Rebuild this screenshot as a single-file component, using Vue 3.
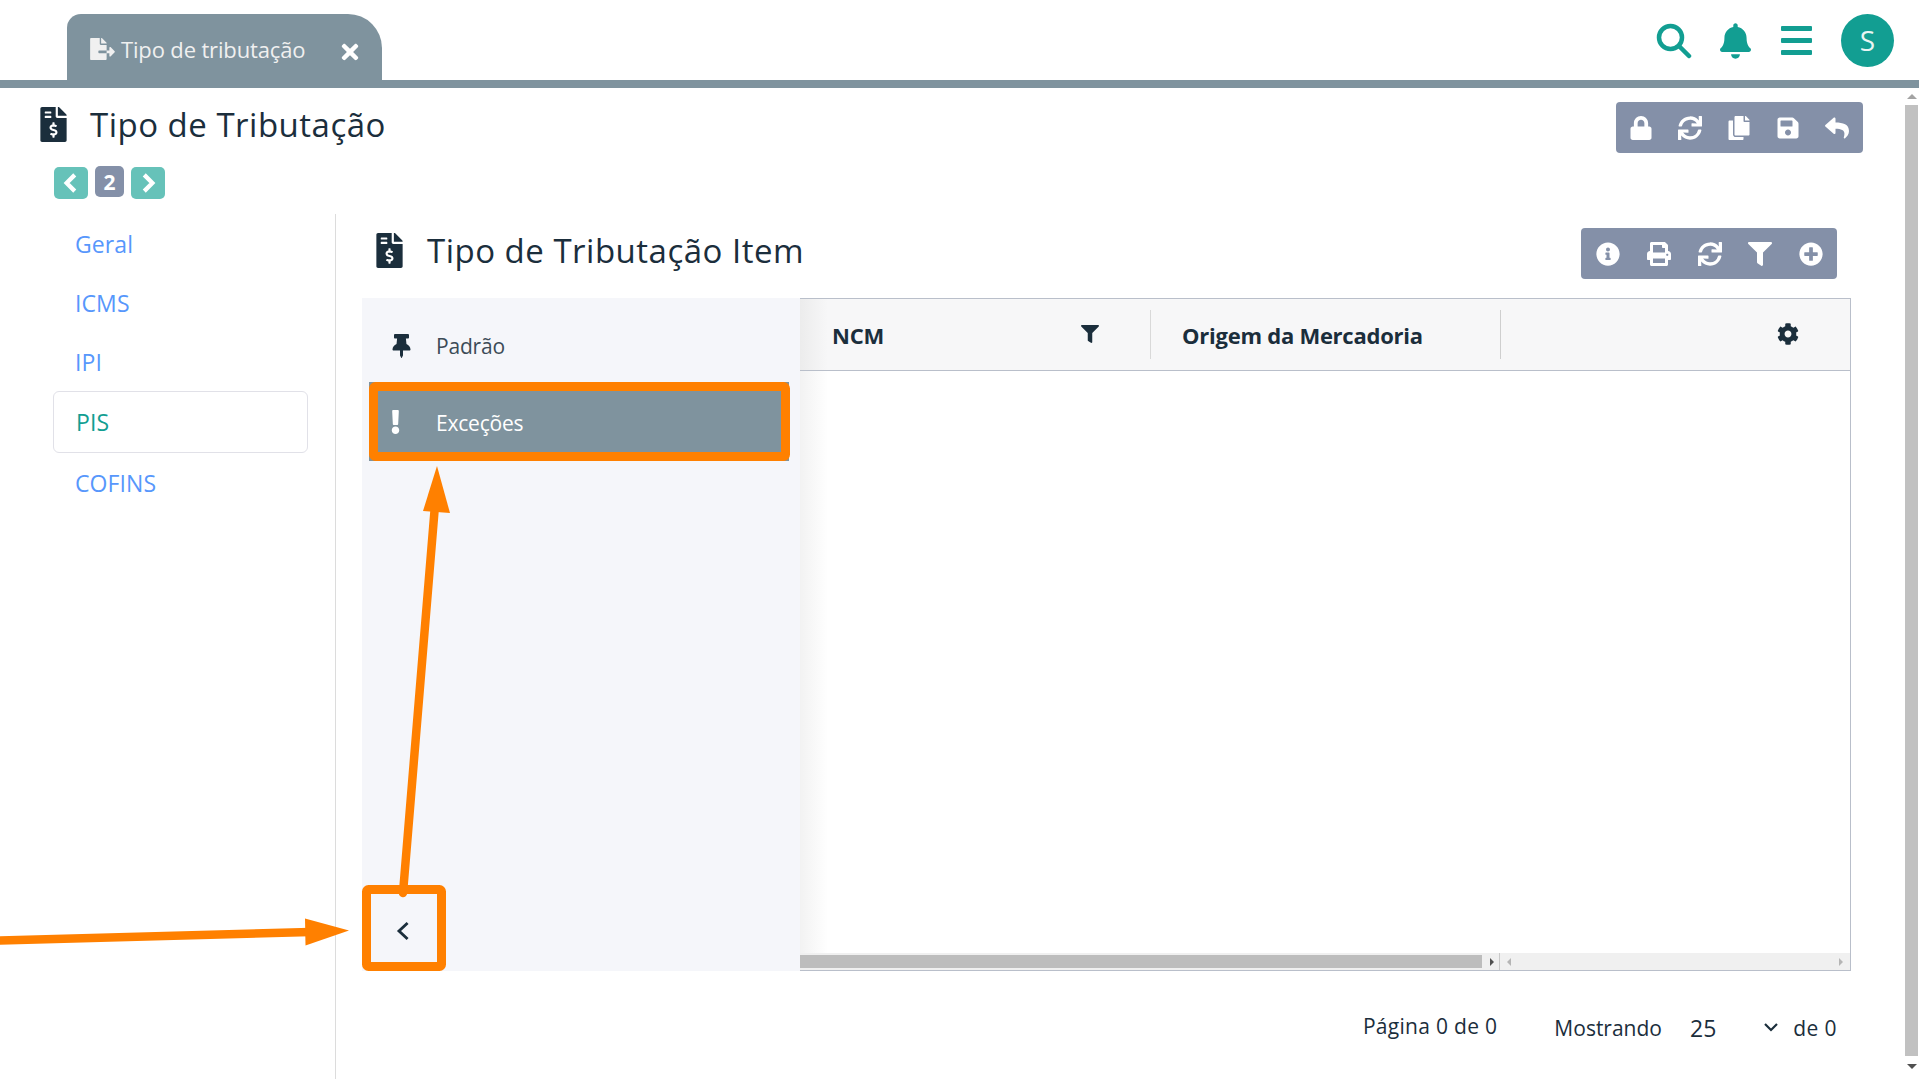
<script setup>
const P = {
  fileDollar: ['0 0 384 512', 'M377 105L279.1 7c-4.5-4.5-10.6-7-17-7H256v128h128v-6.1c0-6.3-2.5-12.4-7-16.9zm-153 31V0H24C10.7 0 0 10.7 0 24v464c0 13.3 10.7 24 24 24h336c13.3 0 24-10.7 24-24V160H248c-13.2 0-24-10.8-24-24zM64 72c0-4.42 3.58-8 8-8h80c4.42 0 8 3.58 8 8v16c0 4.42-3.58 8-8 8H72c-4.42 0-8-3.58-8-8V72zm0 80v-16c0-4.42 3.58-8 8-8h80c4.42 0 8 3.58 8 8v16c0 4.42-3.58 8-8 8H72c-4.42 0-8-3.58-8-8zm144 263.88V440c0 4.42-3.58 8-8 8h-16c-4.42 0-8-3.58-8-8v-24.29c-11.29-.58-22.27-4.52-31.37-11.35-3.9-2.93-4.1-8.77-.57-12.14l11.75-11.21c2.77-2.64 6.89-2.76 10.13-.73 3.87 2.42 8.26 3.72 12.82 3.72h28.11c6.5 0 11.8-5.92 11.8-13.19 0-5.95-3.61-11.19-8.77-12.73l-45-13.5c-18.59-5.58-31.58-23.42-31.58-43.39 0-24.52 19.05-44.44 42.67-45.07V232c0-4.42 3.58-8 8-8h16c4.42 0 8 3.58 8 8v24.29c11.29.58 22.27 4.51 31.37 11.35 3.9 2.93 4.1 8.77.57 12.14l-11.75 11.21c-2.77 2.64-6.89 2.76-10.13.73-3.87-2.43-8.26-3.72-12.82-3.72h-28.11c-6.5 0-11.8 5.92-11.8 13.19 0 5.95 3.61 11.19 8.77 12.73l45 13.5c18.59 5.58 31.58 23.42 31.58 43.39 0 24.53-19.05 44.44-42.67 45.07z'],
  fileExport: ['0 0 576 512', 'M384 121.9c0-6.3-2.5-12.4-7-16.9L279.1 7c-4.5-4.5-10.6-7-17-7H256v128h128zM571 308l-95.7-96.4c-10.1-10.1-27.4-3-27.4 11.3V288h-64v64h64v65.2c0 14.3 17.3 21.4 27.4 11.3L571 332c6.6-6.6 6.6-17.4 0-24zm-379 28v-32c0-8.8 7.2-16 16-16h176V160H248c-13.2 0-24-10.8-24-24V0H24C10.7 0 0 10.7 0 24v464c0 13.3 10.7 24 24 24h336c13.3 0 24-10.7 24-24V352H208c-8.8 0-16-7.2-16-16z'],
  times: ['0 0 352 512', 'M242.72 256l100.07-100.07c12.28-12.28 12.28-32.19 0-44.48l-22.24-22.24c-12.28-12.28-32.19-12.28-44.48 0L176 189.28 75.93 89.21c-12.28-12.28-32.19-12.28-44.48 0L9.21 111.45c-12.28 12.28-12.28 32.19 0 44.48L109.28 256 9.21 356.07c-12.28 12.28-12.28 32.19 0 44.48l22.24 22.24c12.28 12.28 32.2 12.28 44.48 0L176 322.72l100.07 100.07c12.28 12.28 32.2 12.28 44.48 0l22.24-22.24c12.28-12.28 12.28-32.19 0-44.48L242.72 256z'],
  bell: ['0 0 448 512', 'M224 512c35.32 0 63.97-28.65 63.97-64H160.03c0 35.35 28.65 64 63.97 64zm215.39-149.71c-19.32-20.76-55.47-51.99-55.47-154.29 0-77.7-54.48-139.9-127.94-155.16V32c0-17.67-14.32-32-31.98-32s-31.98 14.33-31.98 32v20.84C118.56 68.1 64.08 130.3 64.08 208c0 102.3-36.15 133.53-55.47 154.29-6 6.45-8.66 14.16-8.61 21.71.11 16.4 12.98 32 32.1 32h383.8c19.12 0 32-15.6 32.1-32 .05-7.55-2.61-15.27-8.61-21.71z'],
  lock: ['0 0 448 512', 'M400 224h-24v-72C376 68.2 307.8 0 224 0S72 68.2 72 152v72H48c-26.5 0-48 21.5-48 48v192c0 26.5 21.5 48 48 48h352c26.5 0 48-21.5 48-48V272c0-26.5-21.5-48-48-48zm-104 0H152v-72c0-39.7 32.3-72 72-72s72 32.3 72 72v72z'],
  sync: ['0 0 512 512', 'M440.65 12.57l4 82.77A247.16 247.16 0 0 0 255.83 8C134.73 8 33.91 94.92 12.29 209.82A12 12 0 0 0 24.09 224h49.05a12 12 0 0 0 11.67-9.26 175.91 175.91 0 0 1 317-56.94l-101.46-4.86a12 12 0 0 0-12.57 12v47.41a12 12 0 0 0 12 12H500a12 12 0 0 0 12-12V12a12 12 0 0 0-12-12h-47.37a12 12 0 0 0-11.98 12.57zM255.83 432a175.61 175.61 0 0 1-146-77.8l101.8 4.87a12 12 0 0 0 12.57-12v-47.4a12 12 0 0 0-12-12H12a12 12 0 0 0-12 12V500a12 12 0 0 0 12 12h47.35a12 12 0 0 0 12-12.6l-4.15-82.57A247.17 247.17 0 0 0 255.83 504c121.11 0 221.93-86.92 243.55-201.82a12 12 0 0 0-11.8-14.18h-49.05a12 12 0 0 0-11.67 9.26A175.86 175.86 0 0 1 255.83 432z'],
  copy: ['0 0 448 512', 'M320 448v40c0 13.255-10.745 24-24 24H24c-13.255 0-24-10.745-24-24V120c0-13.255 10.745-24 24-24h72v296c0 30.879 25.121 56 56 56h168zm0-344V0H152c-13.255 0-24 10.745-24 24v368c0 13.255 10.745 24 24 24h272c13.255 0 24-10.745 24-24V128H344c-13.2 0-24-10.8-24-24zm120.971-31.029L375.029 7.029A24 24 0 0 0 358.059 0H352v96h96v-6.059a24 24 0 0 0-7.029-16.97z'],
  save: ['0 0 448 512', 'M433.941 129.941l-83.882-83.882A48 48 0 0 0 316.118 32H48C21.49 32 0 53.49 0 80v352c0 26.51 21.49 48 48 48h352c26.51 0 48-21.49 48-48V163.882a48 48 0 0 0-14.059-33.941zM224 416c-35.346 0-64-28.654-64-64 0-35.346 28.654-64 64-64s64 28.654 64 64c0 35.346-28.654 64-64 64zm96-304.52V212c0 6.627-5.373 12-12 12H76c-6.627 0-12-5.373-12-12V108c0-6.627 5.373-12 12-12h228.52c3.183 0 6.235 1.264 8.485 3.515l3.48 3.48A11.996 11.996 0 0 1 320 111.48z'],
  reply: ['0 0 512 512', 'M8.309 189.836L184.313 37.851C199.719 24.546 224 35.347 224 56.015v80.053c160.629 1.839 288 34.032 288 186.258 0 61.441-39.581 122.309-83.333 154.132-13.653 9.931-33.111-2.533-28.077-18.631 45.344-145.012-21.507-183.51-176.59-185.742V360c0 20.7-24.3 31.453-39.687 18.164l-176.004-152c-11.071-9.562-11.086-26.753 0-36.328z'],
  info: ['0 0 512 512', 'M256 8C119.043 8 8 119.083 8 256c0 136.997 111.043 248 248 248s248-111.003 248-248C504 119.083 392.957 8 256 8zm0 110c23.196 0 42 18.804 42 42s-18.804 42-42 42-42-18.804-42-42 18.804-42 42-42zm56 254c0 6.627-5.373 12-12 12h-88c-6.627 0-12-5.373-12-12v-24c0-6.627 5.373-12 12-12h12v-64h-12c-6.627 0-12-5.373-12-12v-24c0-6.627 5.373-12 12-12h64c6.627 0 12 5.373 12 12v100h12c6.627 0 12 5.373 12 12v24z'],
  print: ['0 0 512 512', 'M448 192V77.25c0-8.49-3.37-16.62-9.37-22.63L393.37 9.37c-6-6-14.14-9.37-22.63-9.37H96C78.33 0 64 14.33 64 32v160c-35.35 0-64 28.65-64 64v112c0 8.84 7.16 16 16 16h48v96c0 17.67 14.33 32 32 32h320c17.67 0 32-14.33 32-32v-96h48c8.84 0 16-7.16 16-16V256c0-35.35-28.65-64-64-64zm-64 256H128v-96h256v96zm0-224H128V64h192v48c0 8.84 7.16 16 16 16h48v96zm48 72c-13.25 0-24-10.75-24-24 0-13.26 10.75-24 24-24s24 10.74 24 24c0 13.25-10.75 24-24 24z'],
  filter: ['0 0 512 512', 'M487.976 0H24.028C2.71 0-8.047 25.866 7.058 40.971L192 225.941V432c0 7.831 3.821 15.17 10.237 19.662l80 55.98C298.02 518.69 320 507.493 320 487.98V225.941l184.947-184.97C520.021 25.896 509.338 0 487.976 0z'],
  plus: ['0 0 512 512', 'M256 8C119 8 8 119 8 256s111 248 248 248 248-111 248-248S393 8 256 8zm144 276c0 6.6-5.4 12-12 12h-92v92c0 6.6-5.4 12-12 12h-56c-6.6 0-12-5.4-12-12v-92h-92c-6.6 0-12-5.4-12-12v-56c0-6.6 5.4-12 12-12h92v-92c0-6.6 5.4-12 12-12h56c6.6 0 12 5.4 12 12v92h92c6.6 0 12 5.4 12 12v56z'],
  cog: ['0 0 512 512', 'M487.4 315.7l-42.6-24.6c4.3-23.2 4.3-47 0-70.2l42.6-24.6c4.9-2.8 7.1-8.6 5.5-14-11.1-35.6-30-67.8-54.7-94.6-3.8-4.1-10-5.1-14.8-2.3L380.8 110c-17.9-15.4-38.5-27.3-60.8-35.1V25.8c0-5.6-3.9-10.5-9.4-11.7-36.7-8.2-74.3-7.8-109.2 0-5.5 1.2-9.4 6.1-9.4 11.7V75c-22.2 7.9-42.8 19.8-60.8 35.1L88.7 85.5c-4.9-2.8-11-1.9-14.8 2.3-24.7 26.7-43.6 58.9-54.7 94.6-1.7 5.4.6 11.2 5.5 14L67.3 221c-4.3 23.2-4.3 47 0 70.2l-42.6 24.6c-4.9 2.8-7.1 8.6-5.5 14 11.1 35.6 30 67.8 54.7 94.6 3.8 4.1 10 5.1 14.8 2.3l42.6-24.6c17.9 15.4 38.5 27.3 60.8 35.1v49.2c0 5.6 3.9 10.5 9.4 11.7 36.7 8.2 74.3 7.8 109.2 0 5.5-1.2 9.4-6.1 9.4-11.7v-49.2c22.2-7.9 42.8-19.8 60.8-35.1l42.6 24.6c4.9 2.8 11 1.9 14.8-2.3 24.7-26.7 43.6-58.9 54.7-94.6 1.5-5.5-.7-11.3-5.6-14.1zM256 336c-44.1 0-80-35.9-80-80s35.9-80 80-80 80 35.9 80 80-35.9 80-80 80z'],
  pin: ['0 0 384 512', 'M298.028 214.267L285.793 96H328c13.255 0 24-10.745 24-24V24c0-13.255-10.745-24-24-24H56C42.745 0 32 10.745 32 24v48c0 13.255 10.745 24 24 24h42.207L85.972 214.267C37.465 236.82 0 277.261 0 328c0 13.255 10.745 24 24 24h136v104.007c0 1.242.289 2.467.845 3.578l24 48c2.941 5.882 11.364 5.893 14.311 0l24-48a8.008 8.008 0 0 0 .845-3.578V352h136c13.255 0 24-10.745 24-24-.001-51.183-37.983-91.42-85.973-113.733z'],
  bang: ['0 0 192 512', 'M176 432c0 44.112-35.888 80-80 80s-80-35.888-80-80 35.888-80 80-80 80 35.888 80 80zM25.26 25.199l13.6 272C39.499 309.972 50.041 320 62.83 320h66.34c12.789 0 23.331-10.028 23.97-22.801l13.6-272C167.425 11.49 156.496 0 142.77 0H49.23C35.504 0 24.575 11.49 25.26 25.199z'],
}
const topTools = ['lock', 'sync', 'copy', 'save', 'reply']
const itemTools = ['info', 'print', 'sync', 'filter', 'plus']
const tabs = [
  { label: 'Geral' },
  { label: 'ICMS' },
  { label: 'IPI' },
  { label: 'PIS', active: true },
  { label: 'COFINS' },
]
</script>

<template>
  <div class="page">
    <header class="topbar">
      <div class="tab">
        <svg class="tab-icon" :viewBox="P.fileExport[0]"><path :d="P.fileExport[1]" /></svg>
        <span class="tab-label">Tipo de tributação</span>
        <svg class="tab-close" :viewBox="P.times[0]"><path :d="P.times[1]" /></svg>
      </div>
      <div class="top-actions">
        <svg class="search" viewBox="0 0 36 36"><circle cx="14.5" cy="14.5" r="11.5" /><line x1="23" y1="23" x2="33" y2="33" /></svg>
        <svg class="bell" :viewBox="P.bell[0]"><path :d="P.bell[1]" /></svg>
        <div class="burger"><i></i><i></i><i></i></div>
        <div class="avatar">S</div>
      </div>
    </header>

    <div class="viewport">
      <main class="content">
        <div class="title-row">
          <div class="title-col">
            <div class="title">
              <svg class="title-icon" :viewBox="P.fileDollar[0]"><path :d="P.fileDollar[1]" /></svg>
              <h1>Tipo de Tributação</h1>
            </div>
            <div class="pager">
              <span class="pg-btn"><svg viewBox="0 0 16 16"><path d="M11 1.500 4.500 8l6.500 6.500" /></svg></span>
              <span class="pg-num">2</span>
              <span class="pg-btn"><svg viewBox="0 0 16 16"><path d="M5 1.500 11.500 8 5 14.500" /></svg></span>
            </div>
          </div>
          <div class="toolbar top">
            <svg v-for="t in topTools" :key="t" :viewBox="P[t][0]"><path :d="P[t][1]" /></svg>
          </div>
        </div>

        <div class="body">
          <nav class="side">
            <a v-for="t in tabs" :key="t.label" class="side-link" :class="{ active: t.active }">{{ t.label }}</a>
          </nav>

          <section class="detail">
            <div class="detail-head">
              <div class="title small">
                <svg class="title-icon" :viewBox="P.fileDollar[0]"><path :d="P.fileDollar[1]" /></svg>
                <h2>Tipo de Tributação Item</h2>
              </div>
              <div class="toolbar item">
                <svg v-for="t in itemTools" :key="t" :viewBox="P[t][0]"><path :d="P[t][1]" /></svg>
              </div>
            </div>

            <div class="workspace">
              <aside class="views">
                <div class="view">
                  <svg class="pin" :viewBox="P.pin[0]"><path :d="P.pin[1]" /></svg>
                  <span>Padrão</span>
                </div>
                <div class="view selected">
                  <svg class="bang" :viewBox="P.bang[0]"><path :d="P.bang[1]" /></svg>
                  <span>Exceções</span>
                </div>
                <button class="collapse">
                  <svg viewBox="0 0 14 18"><path d="M11 2 3.500 9 11 16" /></svg>
                </button>
              </aside>

              <div class="grid">
                <div class="grid-head">
                  <div class="col ncm">
                    <b>NCM</b>
                    <svg :viewBox="P.filter[0]"><path :d="P.filter[1]" /></svg>
                  </div>
                  <div class="col origem"><b>Origem da Mercadoria</b></div>
                  <div class="col gear">
                    <svg :viewBox="P.cog[0]"><path :d="P.cog[1]" /></svg>
                  </div>
                </div>
                <div class="grid-body"></div>
                <div class="hscroll">
                  <div class="hs-left">
                    <div class="hs-thumb"></div>
                    <span class="tri right dark"></span>
                  </div>
                  <div class="hs-right">
                    <span class="tri left"></span>
                    <span class="tri right"></span>
                  </div>
                </div>
              </div>
            </div>

            <footer class="foot">
              <span class="foot-page">Página 0 de 0</span>
              <span class="foot-show">Mostrando</span>
              <span class="foot-size">25</span>
              <svg class="foot-chev" viewBox="0 0 16 10"><path d="M2 2l6 6 6-6" /></svg>
              <span class="foot-of">de 0</span>
            </footer>
          </section>
        </div>
      </main>

      <div class="vscroll">
        <span class="tri up"></span>
        <div class="vs-thumb"></div>
        <span class="tri down"></span>
      </div>
    </div>

    <svg class="arrows" viewBox="0 0 1919 1079">
      <rect x="373.5" y="386.5" width="412" height="70" rx="2" class="ring" />
      <rect x="366.5" y="889.5" width="75" height="77" rx="2" class="ring" />
      <path class="line" d="M403 893 435 505" />
      <path class="head" d="M437 466 450 513 423 511Z" />
      <path class="line" d="M0 940.5 310 932" />
      <path class="head" d="M349 930.5 305 918.5 305.5 945.5Z" />
    </svg>
  </div>
</template>

<style>
html, body { margin: 0; background: #fff; }
</style>

<style scoped>
.page {
  position: relative;
  width: 1919px;
  height: 1079px;
  overflow: hidden;
  display: flex;
  flex-direction: column;
  font-family: "Open Sans", "Noto Sans", sans-serif;
  color: #1b2e3c;
}
svg { display: block; fill: currentColor; }

.topbar {
  height: 80px;
  flex: none;
  display: flex;
  justify-content: space-between;
  align-items: flex-end;
  border-bottom: 8px solid #7f939e;
  padding-left: 67px;
}
.tab {
  width: 315px;
  height: 66px;
  box-sizing: border-box;
  background: #7f939e;
  border-radius: 14px 34px 0 0;
  display: flex;
  align-items: center;
  padding: 0 23px 0 22px;
  color: #f0f0f0;
}
.tab-icon { width: 27px; height: 22px; margin-top: 3px; }
.tab-label { font-size: 22px; letter-spacing: -.15px; margin-left: 5px; white-space: nowrap; flex: 1; padding-top: 3px; }
.tab-close { width: 18px; height: 24px; color: #fff; margin-top: 9px; }

.top-actions {
  display: flex;
  align-items: center;
  height: 80px;
  padding-right: 25px;
  color: #129e92;
}
.search { width: 36px; height: 36px; fill: none; stroke: #129e92; stroke-width: 4.5; stroke-linecap: round; margin-top: 1px; }
.bell { width: 31px; height: 36px; margin-left: 28px; margin-top: 1px; }
.burger { width: 31px; margin-left: 30px; display: flex; flex-direction: column; gap: 7px; margin-top: 1px; }
.burger i { display: block; height: 5px; background: #129e92; border-radius: 1px; }
.avatar {
  width: 53px; height: 53px; border-radius: 50%; margin-left: 29px;
  background: #129e92; color: #e8f5f3; font-size: 28px;
  display: flex; align-items: center; justify-content: center;
}

.viewport { flex: 1; min-height: 0; display: flex; }
.content { flex: 1; min-width: 0; display: flex; flex-direction: column; }

.vscroll {
  width: 15px; flex: none; display: flex; flex-direction: column; align-items: center;
  padding-top: 6px; box-sizing: border-box;
}
.vs-thumb { width: 13px; height: 951px; background: #c1c1c1; margin: 6px 0 8px; }

.tri { width: 0; height: 0; display: block; border-style: solid; border-color: transparent; }
.tri.up { border-width: 0 5px 5px; border-bottom-color: #a3a3a3; }
.tri.down { border-width: 5px 5px 0; border-top-color: #505050; }
.tri.right { border-width: 4px 0 4px 4px; border-left-color: #b5b5b5; }
.tri.right.dark { border-left-color: #505050; }
.tri.left { border-width: 4px 4px 4px 0; border-right-color: #b5b5b5; }

.title-row {
  height: 126px;
  flex: none;
  display: flex;
  justify-content: space-between;
  align-items: flex-start;
  padding: 14px 41px 0 40px;
  box-sizing: border-box;
}
.title { display: flex; align-items: center; height: 44px; }
.title-icon { width: 27px; height: 35px; flex: none; color: #1b2e3c; }
h1, h2 { margin: 0; font-weight: 400; color: #1b2e3c; white-space: nowrap; font-size: 33px; line-height: 44px; letter-spacing: .5px; padding-top: 1px; }
h1 { margin-left: 23px; }
h2 { margin-left: 24px; }
.pager { display: flex; align-items: flex-start; margin: 20px 0 0 14px; gap: 7px; }
.pg-btn {
  width: 34px; height: 32px; border-radius: 5px; background: #66c2b9;
  display: flex; align-items: center; justify-content: center; margin-top: 1px;
}
.pg-btn svg { width: 20px; height: 20px; fill: none; stroke: #fff; stroke-width: 3.4; }
.pg-num {
  width: 29px; height: 31px; border-radius: 5px; background: #8490a8; color: #fff;
  font-size: 21px; font-weight: 700; display: flex; align-items: center; justify-content: center;
}

.toolbar {
  display: flex; align-items: center; justify-content: space-between;
  height: 51px; background: #8490a8; border-radius: 4px; box-sizing: border-box; color: #fff;
}
.toolbar svg { width: 24px; height: 24px; }
.toolbar.top { width: 247px; padding: 0 14px 0 13px; }
.toolbar.item { width: 256px; padding: 0 14px 0 15px; }

.body { flex: 1; min-height: 0; display: flex; }
.side {
  width: 336px; flex: none; box-sizing: border-box; border-right: 1px solid #dcdcdc;
  padding: 0 27px 0 53px; display: flex; flex-direction: column; margin-top: 0;
}
.side-link {
  display: flex; align-items: center; height: 59px; padding-left: 22px;
  color: #5797fc; font-size: 23px; letter-spacing: .1px; box-sizing: border-box; flex: none;
}
.side-link:nth-child(4) { height: 62px; }
.side-link.active {
  color: #129e92; border: 1px solid #e1e1e8; border-radius: 6px; padding-left: 22px;
}

.detail { flex: 1; min-width: 0; padding-left: 26px; display: flex; flex-direction: column; }
.detail-head {
  height: 84px; flex: none; display: flex; justify-content: space-between; align-items: flex-start;
  padding: 14px 67px 0 14px; box-sizing: border-box;
}
.workspace { height: 673px; flex: none; display: flex; width: 1489px; }
.views {
  width: 438px; flex: none; background: #f5f6fa; position: relative; box-sizing: border-box;
  padding: 18px 11px 0 7px;
}
.view {
  height: 60px; display: flex; align-items: center; font-size: 21px; letter-spacing: -.2px;
  color: #3c4b57; padding-left: 23px; margin-bottom: 6px;
}
.view .pin { width: 19px; height: 24px; color: #1b2e3c; margin-right: 25px; flex: none; }
.view.selected { height: 79px; margin: 0; background: #7f939e; color: #fff; padding-left: 21px; }
.view.selected span { padding-top: 2px; }
.view .bang { width: 11px; height: 24px; color: #fff; margin-right: 35px; flex: none; }
.collapse {
  position: absolute; left: 0; bottom: 0; width: 82px; height: 86px; padding: 0; border: 0; background: none;
  display: flex; align-items: center; justify-content: center; color: #1b2e3c;
}
.collapse svg { width: 16px; height: 22px; fill: none; stroke: currentColor; stroke-width: 2.5; margin-top: 6px; }

.grid {
  flex: 1; min-width: 0; display: flex; flex-direction: column; box-sizing: border-box;
  border: 1px solid #b9bfca; border-left: 0;
  background: linear-gradient(90deg, #f2f2f2, #fff 28px);
}
.grid-head {
  height: 72px; flex: none; display: flex; align-items: center; box-sizing: border-box;
  border-bottom: 1px solid #b9bfca; background: linear-gradient(90deg, #ececec, #f7f7f8 28px);
  font-size: 22px; color: #1b2e3c;
}
.col { height: 49px; display: flex; align-items: center; box-sizing: border-box; border-right: 1px solid #d9d9d9; }
.col b { font-weight: 700; letter-spacing: -.25px; white-space: nowrap; padding-top: 1px; }
.ncm { width: 351px; padding: 0 51px 0 32px; justify-content: space-between; }
.ncm svg { width: 18px; height: 18px; margin-top: -1px; }
.origem { width: 350px; padding-left: 31px; border-right-color: #cfcfcf; }
.gear { flex: 1; border-right: 0; justify-content: flex-end; padding-right: 51px; }
.gear svg { width: 22px; height: 22px; margin-top: -2px; }
.grid-body { flex: 1; }
.hscroll { height: 17px; flex: none; display: flex; background: #f0f0f0; }
.hs-left { width: 700px; display: flex; align-items: center; border-right: 1px solid #c9c9c9; box-sizing: border-box; }
.hs-thumb { width: 682px; height: 13px; background: #bdbdbd; }
.hs-left .tri { margin-left: 8px; }
.hs-right { flex: 1; display: flex; align-items: center; justify-content: space-between; padding: 0 7px; }

.foot {
  flex: 1; display: flex; align-items: flex-start; position: relative; color: #1b2e3c; font-size: 21px;
  padding: 43px 67px 0 0; justify-content: flex-end; white-space: nowrap;
}
.foot-page { margin-top: -2px; letter-spacing: .3px; }
.foot-show { margin-left: 57px; }
.foot-size { margin-left: 28px; font-size: 23px; margin-top: -2px; }
.foot-chev { width: 16px; height: 10px; fill: none; stroke: #1b2e3c; stroke-width: 2.2; margin: 8px 0 0 47px; }
.foot-of { margin-left: 14px; letter-spacing: .4px; }

.arrows { position: absolute; inset: 0; width: 1919px; height: 1079px; pointer-events: none; }
.ring { fill: none; stroke: #ff8000; stroke-width: 9; }
.arrows .line { fill: none; stroke: #ff8000; stroke-width: 8.5; stroke-linecap: round; }
.arrows .head { fill: #ff8000; }
</style>
